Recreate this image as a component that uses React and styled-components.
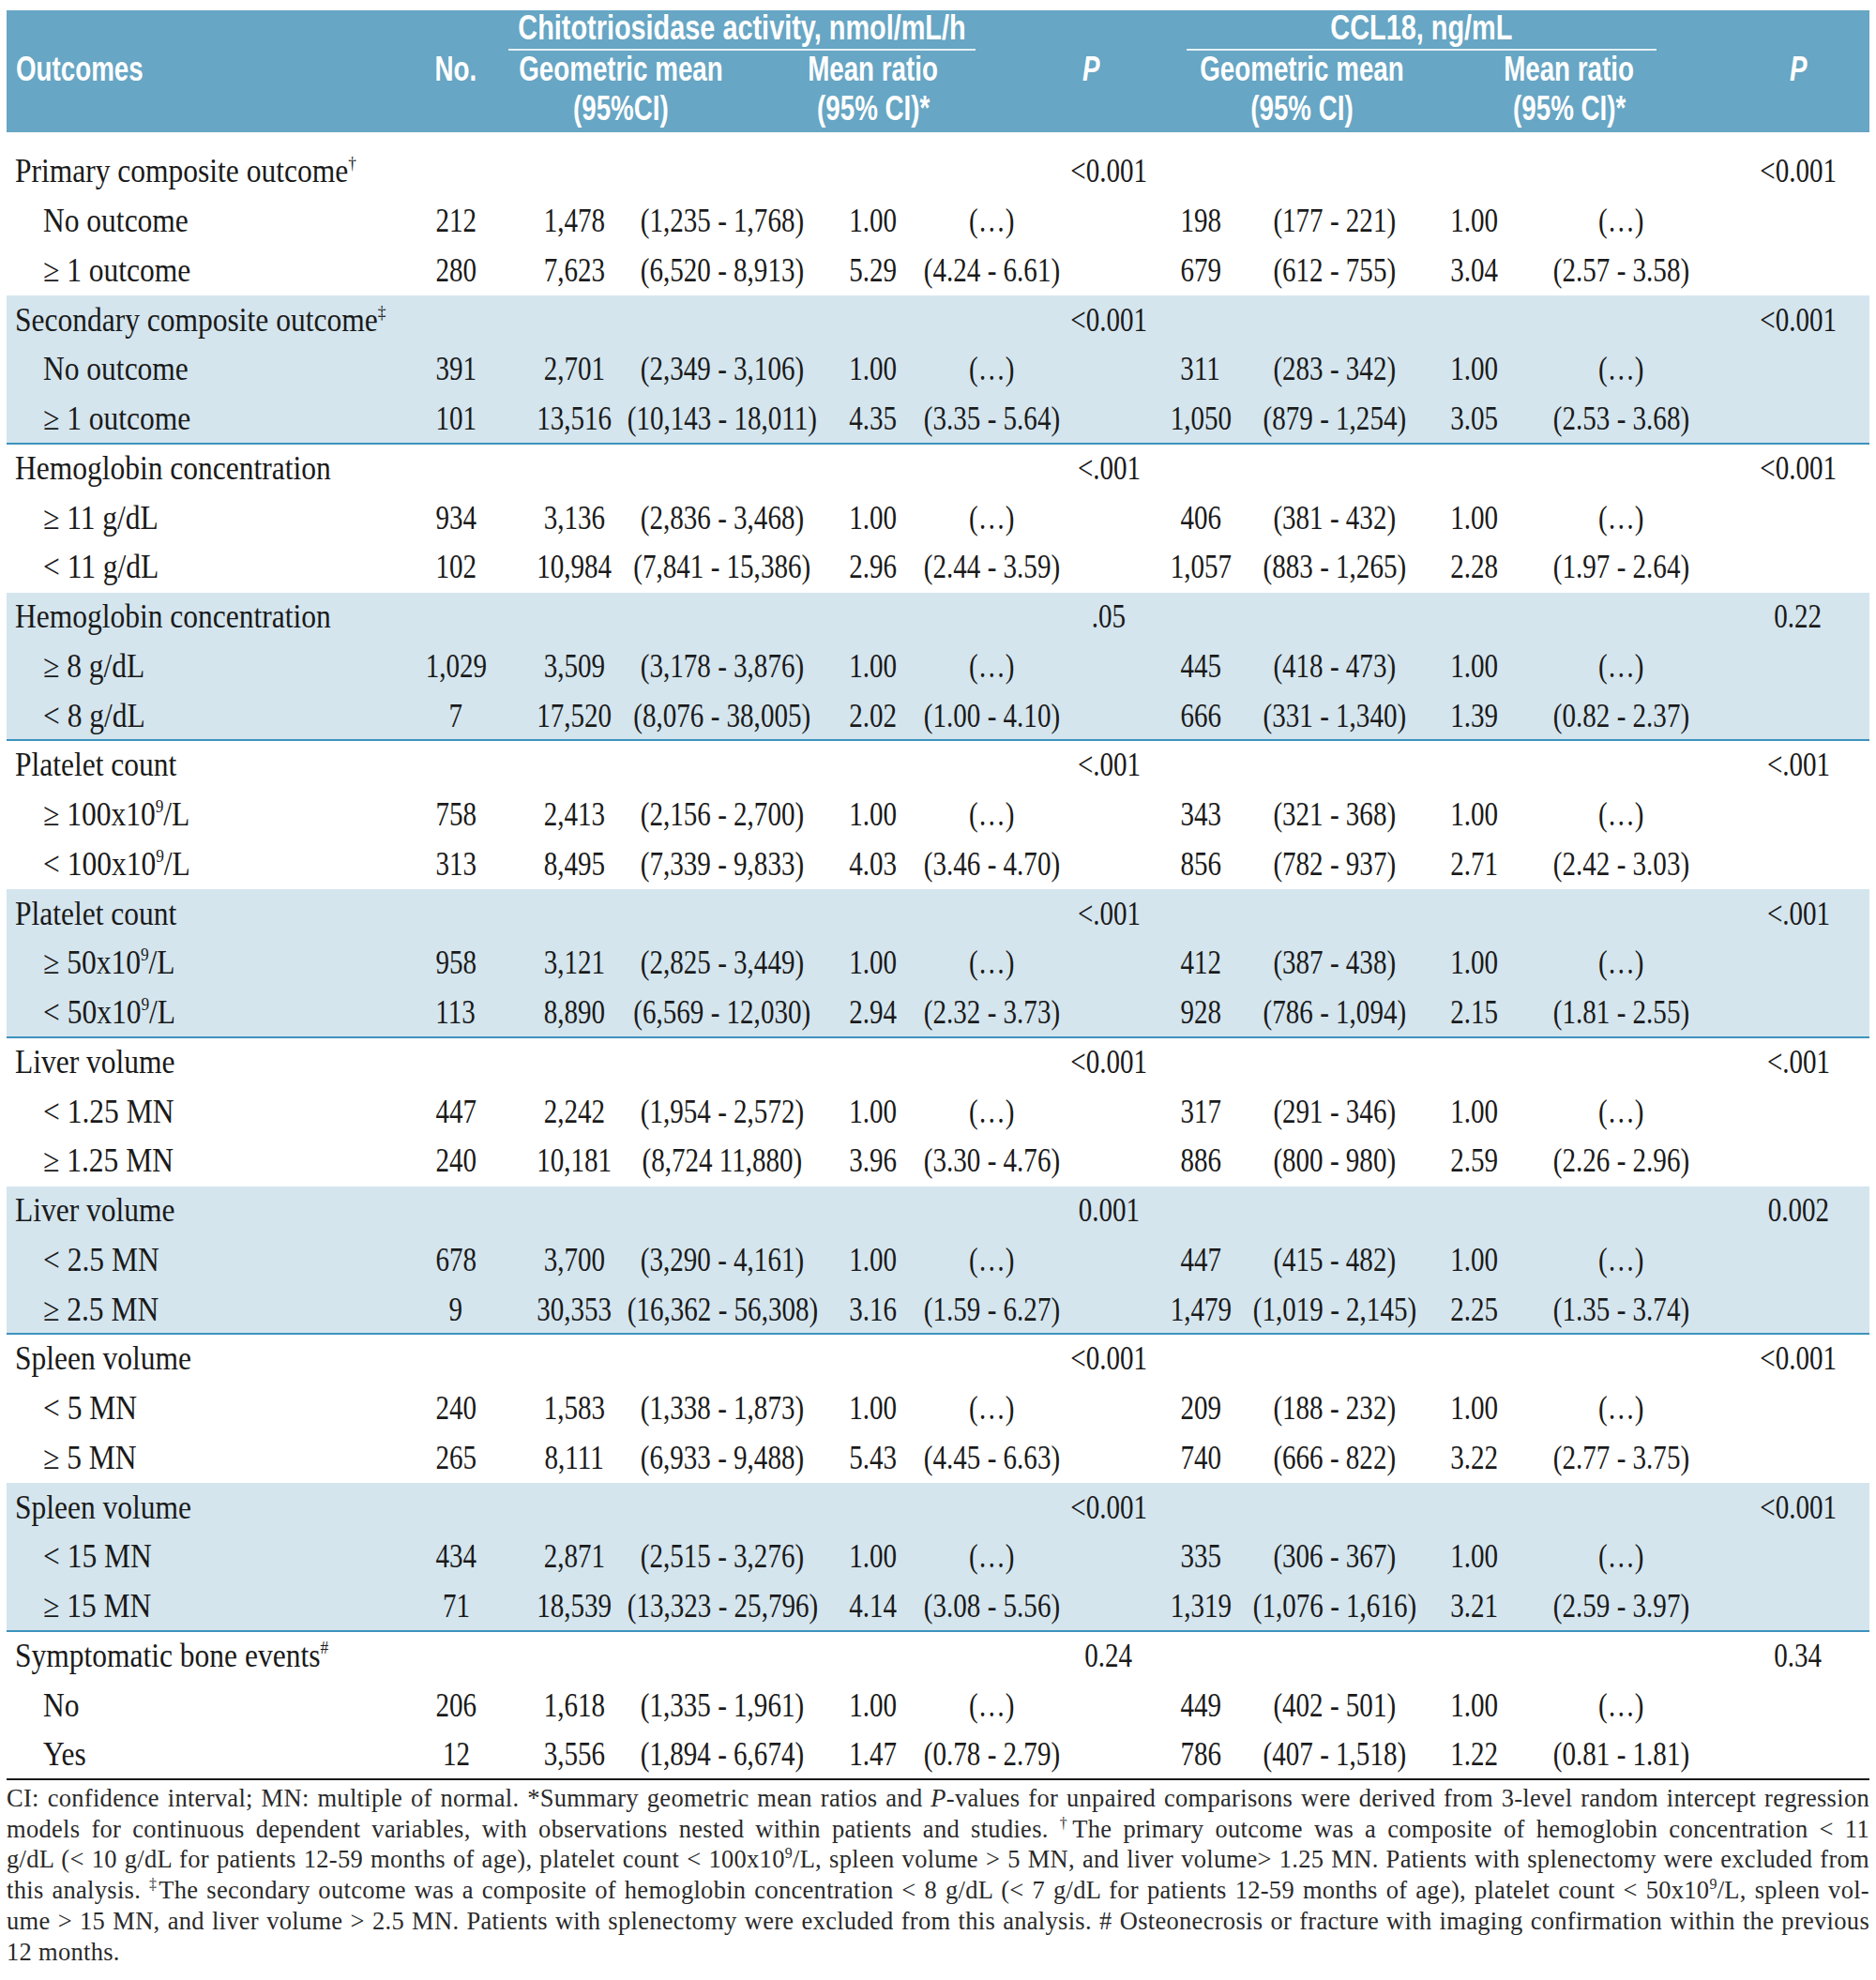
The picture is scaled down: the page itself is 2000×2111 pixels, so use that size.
import React from 'react';
import styled, { createGlobalStyle } from 'styled-components';

const Global = createGlobalStyle`
  html, body { margin: 0; padding: 0; background: #ffffff; }
  body { font-family: "Liberation Serif", "Times New Roman", serif; color: #1a1a1a; }
`;

const BODY_COLS = '419px 120px 132px 184px 138px 114px 136px 60px 226px 72px 240px 138px';
const HEAD_COLS = '429px 100px 252px 286px 178px 272px 298px 190px';

const Page = styled.div`
  width: 1986px;
  padding: 11px 7px 0 7px;
`;

const Header = styled.div`
  display: grid;
  grid-template-columns: ${HEAD_COLS};
  grid-template-rows: 46px 34px 50px;
  height: 130px;
  background: #67a6c4;
  color: #ffffff;
  font-family: "Liberation Sans Narrow", "Liberation Sans", Arial, sans-serif;
  font-weight: 700;
  font-size: 37px;
  overflow: visible;
`;

const HeadCell = styled.div`
  grid-column: ${(p) => p.$col};
  grid-row: ${(p) => p.$row};
  display: flex;
  align-items: center;
  justify-content: ${(p) => (p.$left ? 'flex-start' : 'center')};
  padding-left: ${(p) => (p.$left ? '10px' : '0')};
  white-space: nowrap;
  font-style: ${(p) => (p.$italic ? 'italic' : 'normal')};
`;

const HeadTxt = styled.span`
  display: inline-block;
  transform: scaleX(${(p) => p.$sx || 0.75});
  transform-origin: ${(p) => (p.$left ? 'left center' : 'center center')};
`;

const GroupTitle = styled.div`
  grid-column: ${(p) => p.$col};
  grid-row: 1;
  align-self: start;
  margin-left: ${(p) => p.$offset}px;
  width: ${(p) => p.$width}px;
  height: 43px;
  line-height: 38px;
  display: flex;
  justify-content: center;
  white-space: nowrap;
  border-bottom: 2px solid #e6f0f5;
  box-sizing: border-box;
`;

const Body = styled.div`
  padding-top: 16px;
`;

const Group = styled.div`
  background: ${(p) => (p.$shaded ? '#d4e5ee' : '#ffffff')};
  box-shadow: ${(p) =>
    p.$last ? 'inset 0 -2px 0 #1a1a1a' : p.$shaded ? 'inset 0 -2px 0 #3d93bd' : 'none'};
`;

const Row = styled.div`
  display: grid;
  grid-template-columns: ${BODY_COLS};
  height: 52.75px;
  align-items: center;
  font-size: 35px;
`;

const Cell = styled.div`
  display: flex;
  justify-content: ${(p) => (p.$label ? 'flex-start' : 'center')};
  padding-left: ${(p) => (p.$label ? (p.$indent ? '39px' : '9px') : '0')};
  white-space: nowrap;
  overflow: visible;
  min-width: 0;
`;

const Txt = styled.span`
  display: inline-block;
  transform: scaleX(${(p) => (p.$label ? 0.9 : 0.83)});
  transform-origin: ${(p) => (p.$label ? 'left center' : 'center center')};
`;

const Sup = styled.sup`
  font-size: 0.55em;
  vertical-align: 0.75em;
  line-height: 0;
`;

const Notes = styled.div`
  padding-top: 3px;
  font-size: 26.5px;
  letter-spacing: 0.3px;
  line-height: 32.8px;
  color: #2a2a2a;
`;

const NoteLine = styled.div`
  text-align: justify;
  text-align-last: ${(p) => (p.$last ? 'left' : 'justify')};
  white-space: nowrap;
`;

const NoteSup = styled.sup`
  font-size: 0.6em;
  vertical-align: 0.6em;
  line-height: 0;
`;

const E9 = () => (
  <>
    100x10<Sup>9</Sup>/L
  </>
);

const groups = [
  {
    title: <>Primary composite outcome<Sup>†</Sup></>,
    p1: '<0.001',
    p2: '<0.001',
    rows: [
      ['No outcome', '212', '1,478', '(1,235 - 1,768)', '1.00', '(…)', '198', '(177 - 221)', '1.00', '(…)'],
      ['≥ 1 outcome', '280', '7,623', '(6,520 - 8,913)', '5.29', '(4.24 - 6.61)', '679', '(612 - 755)', '3.04', '(2.57 - 3.58)'],
    ],
  },
  {
    title: <>Secondary composite outcome<Sup>‡</Sup></>,
    p1: '<0.001',
    p2: '<0.001',
    rows: [
      ['No outcome', '391', '2,701', '(2,349 - 3,106)', '1.00', '(…)', '311', '(283 - 342)', '1.00', '(…)'],
      ['≥ 1 outcome', '101', '13,516', '(10,143 - 18,011)', '4.35', '(3.35 - 5.64)', '1,050', '(879 - 1,254)', '3.05', '(2.53 - 3.68)'],
    ],
  },
  {
    title: 'Hemoglobin concentration',
    p1: '<.001',
    p2: '<0.001',
    rows: [
      ['≥ 11 g/dL', '934', '3,136', '(2,836 - 3,468)', '1.00', '(…)', '406', '(381 - 432)', '1.00', '(…)'],
      ['< 11 g/dL', '102', '10,984', '(7,841 - 15,386)', '2.96', '(2.44 - 3.59)', '1,057', '(883 - 1,265)', '2.28', '(1.97 - 2.64)'],
    ],
  },
  {
    title: 'Hemoglobin concentration',
    p1: '.05',
    p2: '0.22',
    rows: [
      ['≥ 8 g/dL', '1,029', '3,509', '(3,178 - 3,876)', '1.00', '(…)', '445', '(418 - 473)', '1.00', '(…)'],
      ['< 8 g/dL', '7', '17,520', '(8,076 - 38,005)', '2.02', '(1.00 - 4.10)', '666', '(331 - 1,340)', '1.39', '(0.82 - 2.37)'],
    ],
  },
  {
    title: 'Platelet count',
    p1: '<.001',
    p2: '<.001',
    rows: [
      [<>≥ <E9 /></>, '758', '2,413', '(2,156 - 2,700)', '1.00', '(…)', '343', '(321 - 368)', '1.00', '(…)'],
      [<>&lt; <E9 /></>, '313', '8,495', '(7,339 - 9,833)', '4.03', '(3.46 - 4.70)', '856', '(782 - 937)', '2.71', '(2.42 - 3.03)'],
    ],
  },
  {
    title: 'Platelet count',
    p1: '<.001',
    p2: '<.001',
    rows: [
      [<>≥ 50x10<Sup>9</Sup>/L</>, '958', '3,121', '(2,825 - 3,449)', '1.00', '(…)', '412', '(387 - 438)', '1.00', '(…)'],
      [<>&lt; 50x10<Sup>9</Sup>/L</>, '113', '8,890', '(6,569 - 12,030)', '2.94', '(2.32 - 3.73)', '928', '(786 - 1,094)', '2.15', '(1.81 - 2.55)'],
    ],
  },
  {
    title: 'Liver volume',
    p1: '<0.001',
    p2: '<.001',
    rows: [
      ['< 1.25 MN', '447', '2,242', '(1,954 - 2,572)', '1.00', '(…)', '317', '(291 - 346)', '1.00', '(…)'],
      ['≥ 1.25 MN', '240', '10,181', '(8,724  11,880)', '3.96', '(3.30 - 4.76)', '886', '(800 - 980)', '2.59', '(2.26 - 2.96)'],
    ],
  },
  {
    title: 'Liver volume',
    p1: '0.001',
    p2: '0.002',
    rows: [
      ['< 2.5 MN', '678', '3,700', '(3,290 - 4,161)', '1.00', '(…)', '447', '(415 - 482)', '1.00', '(…)'],
      ['≥ 2.5 MN', '9', '30,353', '(16,362 - 56,308)', '3.16', '(1.59 - 6.27)', '1,479', '(1,019 - 2,145)', '2.25', '(1.35 - 3.74)'],
    ],
  },
  {
    title: 'Spleen volume',
    p1: '<0.001',
    p2: '<0.001',
    rows: [
      ['< 5 MN', '240', '1,583', '(1,338 - 1,873)', '1.00', '(…)', '209', '(188 - 232)', '1.00', '(…)'],
      ['≥ 5 MN', '265', '8,111', '(6,933 - 9,488)', '5.43', '(4.45 - 6.63)', '740', '(666 - 822)', '3.22', '(2.77 - 3.75)'],
    ],
  },
  {
    title: 'Spleen volume',
    p1: '<0.001',
    p2: '<0.001',
    rows: [
      ['< 15 MN', '434', '2,871', '(2,515 - 3,276)', '1.00', '(…)', '335', '(306 - 367)', '1.00', '(…)'],
      ['≥ 15 MN', '71', '18,539', '(13,323 - 25,796)', '4.14', '(3.08 - 5.56)', '1,319', '(1,076 - 1,616)', '3.21', '(2.59 - 3.97)'],
    ],
  },
  {
    title: <>Symptomatic bone events<Sup>#</Sup></>,
    p1: '0.24',
    p2: '0.34',
    rows: [
      ['No', '206', '1,618', '(1,335 - 1,961)', '1.00', '(…)', '449', '(402 - 501)', '1.00', '(…)'],
      ['Yes', '12', '3,556', '(1,894 - 6,674)', '1.47', '(0.78 - 2.79)', '786', '(407 - 1,518)', '1.22', '(0.81 - 1.81)'],
    ],
  },
];

function TitleRow({ g }) {
  return (
    <Row>
      <Cell $label>
        <Txt $label>{g.title}</Txt>
      </Cell>
      <Cell />
      <Cell />
      <Cell />
      <Cell />
      <Cell />
      <Cell>
        <Txt>{g.p1}</Txt>
      </Cell>
      <Cell />
      <Cell />
      <Cell />
      <Cell />
      <Cell>
        <Txt>{g.p2}</Txt>
      </Cell>
    </Row>
  );
}

function DataRow({ r }) {
  const [label, ...vals] = r;
  return (
    <Row>
      <Cell $label $indent>
        <Txt $label>{label}</Txt>
      </Cell>
      {vals.slice(0, 5).map((v, i) => (
        <Cell key={i}>
          <Txt>{v}</Txt>
        </Cell>
      ))}
      <Cell />
      {vals.slice(5).map((v, i) => (
        <Cell key={'b' + i}>
          <Txt>{v}</Txt>
        </Cell>
      ))}
      <Cell />
    </Row>
  );
}

export default function App() {
  return (
    <Page>
      <Global />
      <Header>
        <GroupTitle $col="3 / 5" $offset={6} $width={498}>
          <HeadTxt $sx={0.78}>Chitotriosidase activity, nmol/mL/h</HeadTxt>
        </GroupTitle>
        <GroupTitle $col="6 / 8" $offset={13} $width={501}>
          <HeadTxt $sx={0.78}>CCL18, ng/mL</HeadTxt>
        </GroupTitle>
        <HeadCell $col={1} $row={2} $left>
          <HeadTxt $left>Outcomes</HeadTxt>
        </HeadCell>
        <HeadCell $col={2} $row={2}><HeadTxt>No.</HeadTxt></HeadCell>
        <HeadCell $col={3} $row={2}><HeadTxt>Geometric mean</HeadTxt></HeadCell>
        <HeadCell $col={3} $row={3}><HeadTxt>(95%CI)</HeadTxt></HeadCell>
        <HeadCell $col={4} $row={2}><HeadTxt>Mean ratio</HeadTxt></HeadCell>
        <HeadCell $col={4} $row={3}><HeadTxt>(95% CI)*</HeadTxt></HeadCell>
        <HeadCell $col={5} $row={2} $italic><HeadTxt>P</HeadTxt></HeadCell>
        <HeadCell $col={6} $row={2}><HeadTxt>Geometric mean</HeadTxt></HeadCell>
        <HeadCell $col={6} $row={3}><HeadTxt>(95% CI)</HeadTxt></HeadCell>
        <HeadCell $col={7} $row={2}><HeadTxt>Mean ratio</HeadTxt></HeadCell>
        <HeadCell $col={7} $row={3}><HeadTxt>(95% CI)*</HeadTxt></HeadCell>
        <HeadCell $col={8} $row={2} $italic><HeadTxt>P</HeadTxt></HeadCell>
      </Header>
      <Body>
        {groups.map((g, i) => (
          <Group key={i} $shaded={i % 2 === 1} $last={i === groups.length - 1}>
            <TitleRow g={g} />
            {g.rows.map((r, j) => (
              <DataRow key={j} r={r} />
            ))}
          </Group>
        ))}
      </Body>
      <Notes>
        <NoteLine>
          CI: confidence interval; MN: multiple of normal. *Summary geometric mean ratios and <i>P</i>-values for unpaired comparisons were derived from 3-level random intercept regression
        </NoteLine>
        <NoteLine>
          models for continuous dependent variables, with observations nested within patients and studies. <NoteSup>†</NoteSup>The primary outcome was a composite of hemoglobin concentration &lt; 11
        </NoteLine>
        <NoteLine>
          g/dL (&lt; 10 g/dL for patients 12-59 months of age), platelet count &lt; 100x10<NoteSup>9</NoteSup>/L, spleen volume &gt; 5 MN, and liver volume&gt; 1.25 MN. Patients with splenectomy were excluded from
        </NoteLine>
        <NoteLine>
          this analysis. <NoteSup>‡</NoteSup>The secondary outcome was a composite of hemoglobin concentration &lt; 8 g/dL (&lt; 7 g/dL for patients 12-59 months of age), platelet count &lt; 50x10<NoteSup>9</NoteSup>/L, spleen vol-
        </NoteLine>
        <NoteLine>
          ume &gt; 15 MN, and liver volume &gt; 2.5 MN. Patients with splenectomy were excluded from this analysis. # Osteonecrosis or fracture with imaging confirmation within the previous
        </NoteLine>
        <NoteLine $last>12 months.</NoteLine>
      </Notes>
    </Page>
  );
}
